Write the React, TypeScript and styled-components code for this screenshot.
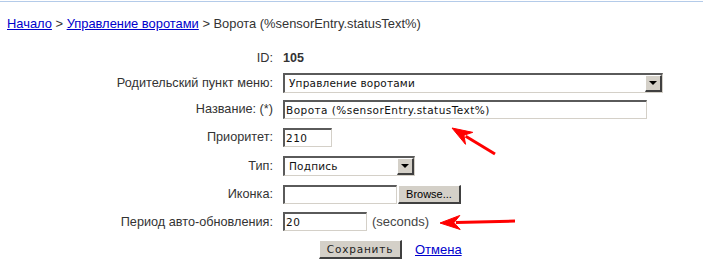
import React from "react";
import styled, { createGlobalStyle } from "styled-components";

const GlobalStyle = createGlobalStyle`
  body {
    margin: 0;
    background: #ffffff;
    font-family: "Liberation Sans", Arial, sans-serif;
  }
`;

const Page = styled.div`
  position: relative;
  width: 703px;
  height: 273px;
  padding-top: 1px;
  box-sizing: border-box;
  overflow: hidden;
`;

const TopRule = styled.div`
  height: 1px;
  background: #b4cbe9;
`;

const Breadcrumb = styled.div`
  margin: 14px 0 0 7px;
  font-size: 12.9px;
  line-height: 16px;
  color: #333333;
  white-space: nowrap;
`;

const Link = styled.a`
  color: #0000cc;
  text-decoration: underline;
`;

const Form = styled.div`
  display: grid;
  grid-template-columns: 273px auto;
  grid-template-rows: 24px 25px 28px 28px 29px 28px 27px 28px;
  column-gap: 10px;
  align-items: center;
  margin-top: 14px;
`;

const Label = styled.div`
  text-align: right;
  font-size: 12.7px;
  color: #333333;
  white-space: nowrap;
`;

const Field = styled.div<{ $gap?: number }>`
  display: flex;
  align-items: center;
  gap: ${(p) => p.$gap ?? 5}px;
`;

const Value = styled.span`
  font-size: 12.5px;
  font-weight: bold;
  color: #333333;
`;

const fieldFont = `
  font-family: "DejaVu Sans", Verdana, sans-serif;
  font-size: 10.5px;
  color: #111111;
`;

const TextInput = styled.input<{ $w: number }>`
  box-sizing: border-box;
  width: ${(p) => p.$w}px;
  height: 19px;
  margin: 0;
  padding: 0 1px;
  background: #ffffff;
  border-style: solid;
  border-width: 2px 1px 1px 2px;
  border-color: #5a5a5a #d4d0c8 #d4d0c8 #5a5a5a;
  ${fieldFont}
  letter-spacing: 0.45px;
  outline: none;
`;

const Select = styled.div<{ $w: number }>`
  box-sizing: border-box;
  width: ${(p) => p.$w}px;
  height: 20px;
  display: flex;
  align-items: stretch;
  background: #ffffff;
  border-style: solid;
  border-width: 2px 1px 1px 2px;
  border-color: #5a5a5a #d4d0c8 #d4d0c8 #5a5a5a;
`;

const SelectText = styled.span`
  flex: 1;
  display: flex;
  align-items: center;
  padding-left: 4px;
  ${fieldFont}
  letter-spacing: 0.2px;
`;

const DropButton = styled.span`
  box-sizing: border-box;
  width: 17px;
  display: flex;
  align-items: center;
  justify-content: center;
  background: #d4d0c8;
  border-style: solid;
  border-width: 1px 2px 2px 1px;
  border-color: #ffffff #404040 #404040 #ffffff;
  &::after {
    content: "";
    border-left: 4px solid transparent;
    border-right: 4px solid transparent;
    border-top: 4px solid #000000;
  }
`;

const Button = styled.button<{ $w: number }>`
  box-sizing: border-box;
  width: ${(p) => p.$w}px;
  height: 19px;
  margin: 0;
  padding: 0;
  background: #d4d0c8;
  border-style: solid;
  border-width: 1px 2px 2px 1px;
  border-color: #ffffff #404040 #404040 #ffffff;
  color: #000000;
`;

const BrowseButton = styled(Button)`
  font-family: "Liberation Sans", Arial, sans-serif;
  font-size: 11px;
`;

const SaveButton = styled(Button)`
  font-family: "DejaVu Sans", Verdana, sans-serif;
  font-size: 10.5px;
  letter-spacing: 0.8px;
  color: #222222;
`;

const Hint = styled.span`
  font-size: 13px;
  color: #444444;
`;

const Actions = styled.div`
  grid-column: 2;
  display: flex;
  align-items: center;
  gap: 13px;
  margin-left: 36px;
  font-size: 13px;
`;

const Arrows = styled.svg`
  position: absolute;
  left: 0;
  top: 0;
  pointer-events: none;
`;

const Arrow = ({ x1, y1, x2, y2 }: { x1: number; y1: number; x2: number; y2: number }) => {
  const a = Math.atan2(y2 - y1, x2 - x1);
  const len = 20;
  const half = 7;
  const bx = x2 - len * Math.cos(a);
  const by = y2 - len * Math.sin(a);
  const px = -Math.sin(a) * half;
  const py = Math.cos(a) * half;
  const points = `${x2},${y2} ${bx + px},${by + py} ${bx + len * 0.3 * Math.cos(a)},${by + len * 0.3 * Math.sin(a)} ${bx - px},${by - py}`;
  return (
    <g fill="#ff0000" stroke="#ff0000">
      <line x1={x1} y1={y1} x2={bx + 4 * Math.cos(a)} y2={by + 4 * Math.sin(a)} strokeWidth={3} />
      <polygon points={points} strokeWidth={1} strokeLinejoin="round" />
    </g>
  );
};

export default function App() {
  return (
    <>
      <GlobalStyle />
      <Page>
        <TopRule />
        <Breadcrumb>
          <Link href="#">Начало</Link> &gt; <Link href="#">Управление воротами</Link> &gt; Ворота
          (%sensorEntry.statusText%)
        </Breadcrumb>
        <Form>
          <Label>ID:</Label>
          <Field>
            <Value>105</Value>
          </Field>

          <Label>Родительский пункт меню:</Label>
          <Field>
            <Select $w={380}>
              <SelectText>Управление воротами</SelectText>
              <DropButton />
            </Select>
          </Field>

          <Label>Название: (*)</Label>
          <Field>
            <TextInput $w={364} defaultValue="Ворота (%sensorEntry.statusText%)" />
          </Field>

          <Label>Приоритет:</Label>
          <Field>
            <TextInput $w={49} defaultValue="210" />
          </Field>

          <Label>Тип:</Label>
          <Field>
            <Select $w={132}>
              <SelectText>Подпись</SelectText>
              <DropButton />
            </Select>
          </Field>

          <Label>Иконка:</Label>
          <Field $gap={1}>
            <TextInput $w={114} defaultValue="" />
            <BrowseButton $w={63}>Browse...</BrowseButton>
          </Field>

          <Label>Период авто-обновления:</Label>
          <Field>
            <TextInput $w={84} defaultValue="20" />
            <Hint>(seconds)</Hint>
          </Field>

          <Actions>
            <SaveButton $w={83}>Сохранить</SaveButton>
            <Link href="#">Отмена</Link>
          </Actions>
        </Form>
        <Arrows width={703} height={273}>
          <Arrow x1={495} y1={154} x2={452} y2={128} />
          <Arrow x1={515} y1={221} x2={440} y2={223} />
        </Arrows>
      </Page>
    </>
  );
}
